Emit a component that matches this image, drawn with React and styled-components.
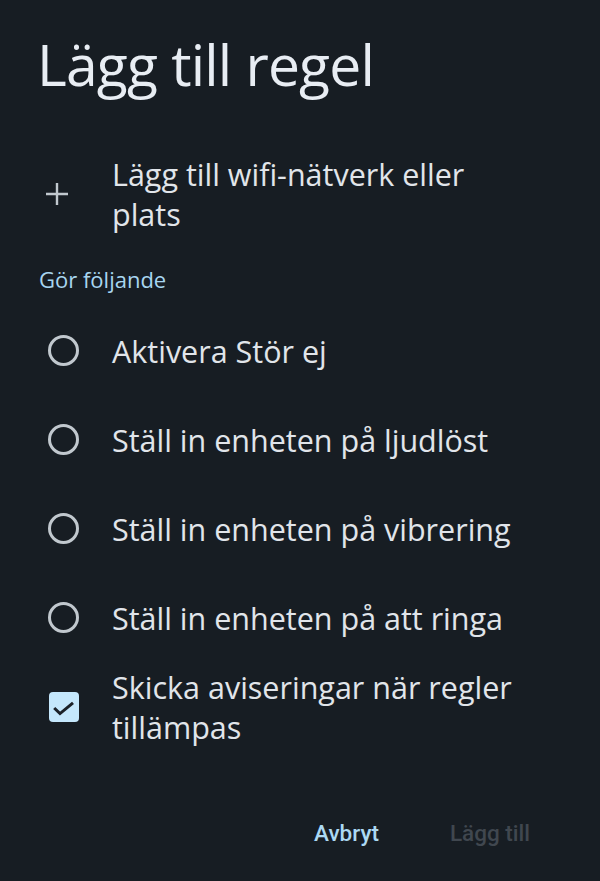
import React from "react";
import styled, { createGlobalStyle } from "styled-components";

const Global = createGlobalStyle`
  html, body { margin: 0; padding: 0; background: #171d23; }
  body { font-family: "Open Sans", "Roboto", sans-serif; }
`;

const Dialog = styled.div`
  width: 600px;
  height: 881px;
  box-sizing: border-box;
  background: #171d23;
  color: #e1e5ea;
  display: flex;
  flex-direction: column;
  padding-top: 30px;
`;

const Title = styled.h1`
  margin: 0 0 0 37px;
  font-family: "Open Sans", sans-serif;
  font-weight: 400;
  font-size: 57px;
  line-height: 68px;
  letter-spacing: -0.8px;
  color: #e8edf3;
`;

const Row = styled.div`
  display: flex;
  align-items: center;
  min-height: ${(p) => p.$h || 89}px;
  margin-top: ${(p) => p.$mt || 0}px;
`;

const IconCell = styled.div`
  width: 112px;
  flex: none;
  box-sizing: border-box;
  display: flex;
  align-items: center;
  padding-left: ${(p) => p.$pl || 48}px;
`;

const Label = styled.div`
  font-family: "Open Sans", sans-serif;
  font-size: 30.5px;
  line-height: 40px;
  color: #e1e5ea;
  padding-right: 63px;
`;

const Section = styled.div`
  margin: 32px 0 0 39px;
  font-family: "Open Sans", sans-serif;
  font-weight: 500;
  font-size: 22px;
  line-height: 26px;
  color: #a8d6f0;
`;

const Radio = styled.span`
  display: block;
  box-sizing: border-box;
  width: 31px;
  height: 31px;
  border-radius: 50%;
  border: 3px solid #c1c8ce;
`;

const Check = styled.span`
  display: block;
  width: 30px;
  height: 30px;
  border-radius: 4px;
  background: #c4e7fc;
`;

const List = styled.div`
  display: flex;
  flex-direction: column;
  margin-top: 14px;
`;

const Buttons = styled.div`
  display: flex;
  justify-content: flex-end;
  gap: 71px;
  padding: 68px 70px 0 0;
`;

const Button = styled.span`
  font-family: "Roboto", sans-serif;
  font-weight: 500;
  font-size: 22.5px;
  line-height: 28px;
  color: ${(p) => (p.$disabled ? "#40474f" : "#acd9f3")};
`;

export default function App() {
  const options = [
    "Aktivera Stör ej",
    "Ställ in enheten på ljudlöst",
    "Ställ in enheten på vibrering",
    "Ställ in enheten på att ringa",
  ];
  return (
    <>
      <Global />
      <Dialog>
        <Title>Lägg till regel</Title>
        <Row $h={80} $mt={56}>
          <IconCell $pl={46}>
            <svg width="22" height="22" viewBox="0 0 22 22">
              <path d="M11 0v22M0 11h22" stroke="#c1c8ce" strokeWidth="2.4" fill="none" />
            </svg>
          </IconCell>
          <Label>Lägg till wifi-nätverk eller plats</Label>
        </Row>
        <Section>Gör följande</Section>
        <List>
          {options.map((o) => (
            <Row key={o}>
              <IconCell $pl={48}>
                <Radio />
              </IconCell>
              <Label>{o}</Label>
            </Row>
          ))}
          <Row>
            <IconCell $pl={49}>
              <Check>
                <svg width="30" height="30" viewBox="0 0 30 30">
                  <path d="M5.2 16l5.8 5.6L24 10.8" stroke="#1b2128" strokeWidth="3" fill="none" />
                </svg>
              </Check>
            </IconCell>
            <Label>Skicka aviseringar när regler tillämpas</Label>
          </Row>
        </List>
        <Buttons>
          <Button>Avbryt</Button>
          <Button $disabled>Lägg till</Button>
        </Buttons>
      </Dialog>
    </>
  );
}
